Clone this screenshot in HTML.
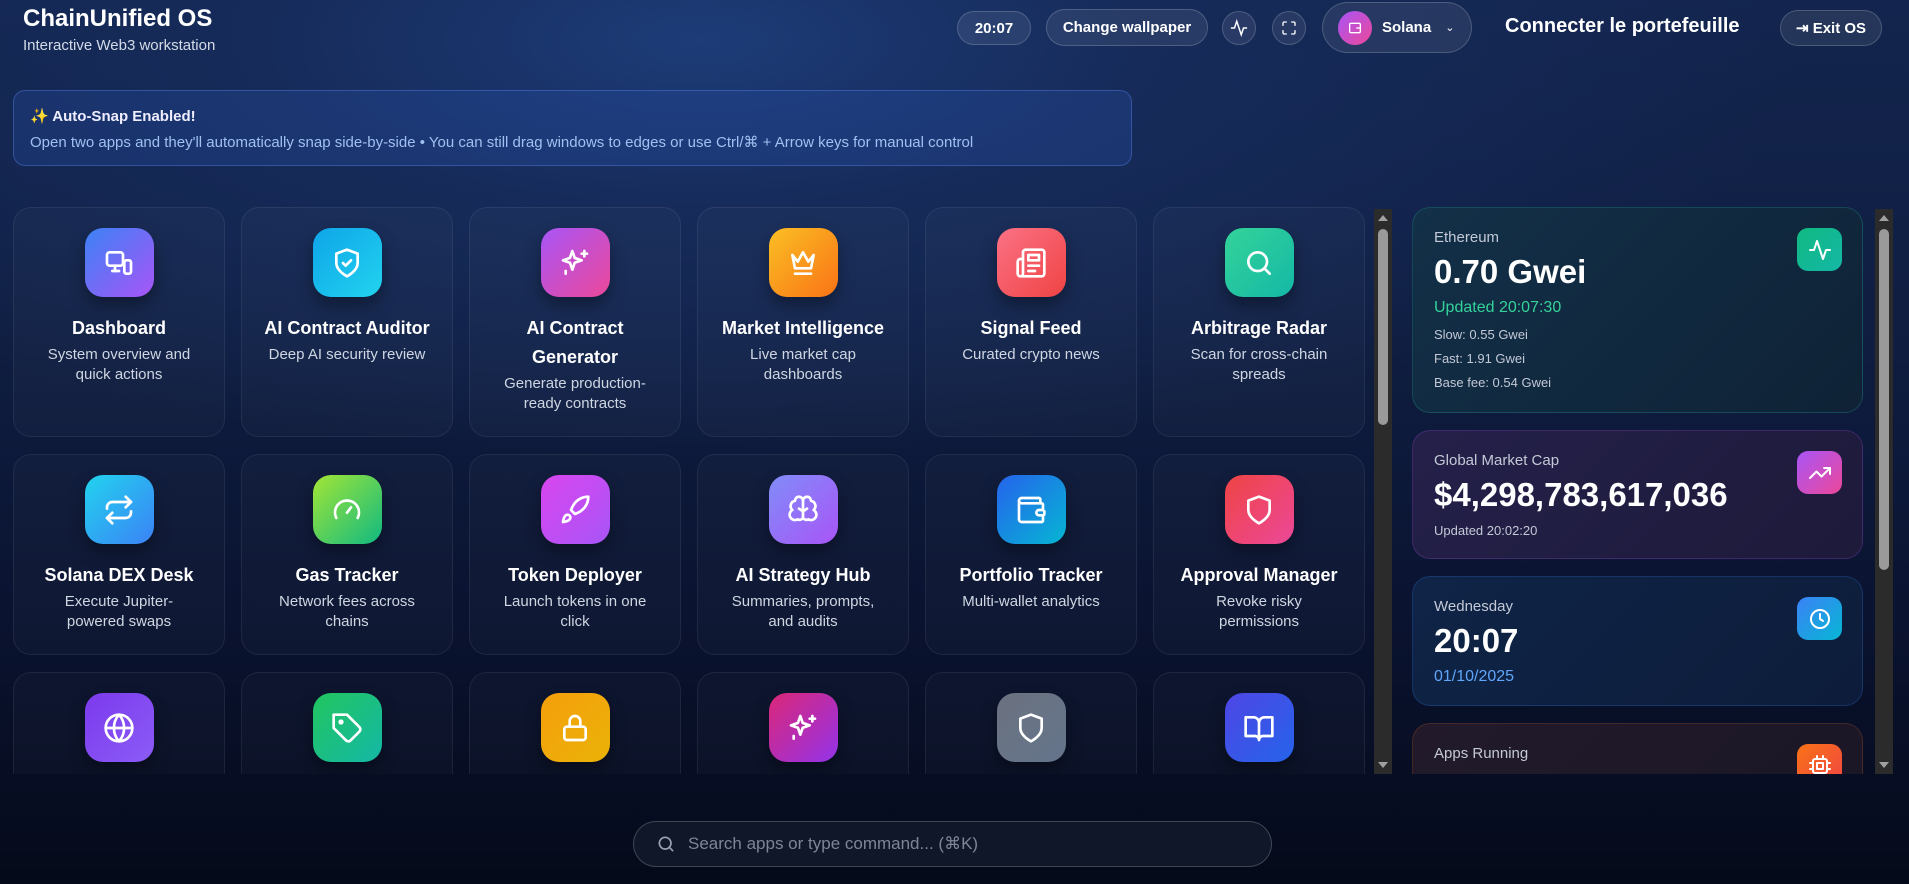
<!DOCTYPE html>
<html><head><meta charset="utf-8"><style>
*{box-sizing:border-box;margin:0;padding:0}
body{width:1909px;height:884px;overflow:hidden;font-family:"Liberation Sans",sans-serif;color:#fff;
background:radial-gradient(ellipse 1100px 420px at 700px 40px,#1d3c78 0%,#162b5a 40%,rgba(14,26,56,0) 100%),linear-gradient(180deg,#13254e 0%,#0f1d40 40%,#0a1330 70%,#050a1a 100%);position:relative}
.abs{position:absolute}
.title{left:23px;top:5px;font-size:24px;font-weight:bold}
.sub{left:23px;top:37px;font-size:15px;color:#d4dbe8}
.pill{position:absolute;border:1px solid rgba(255,255,255,.18);background:rgba(255,255,255,.08);border-radius:999px;display:flex;align-items:center;justify-content:center;font-size:15px;font-weight:bold;color:#fff}
.banner{left:13px;top:90px;width:1119px;height:76px;border:1px solid rgba(90,130,230,.4);background:rgba(40,80,170,.3);border-radius:12px;padding:16px 16px}
.banner b{font-size:15px;display:block;margin-bottom:8px;color:#eef}
.banner span{font-size:15px;color:#9fc0f0}
.grid{left:13px;top:207px;width:1352px;height:567px;overflow:hidden;display:grid;grid-template-columns:repeat(6,212px);column-gap:16px;row-gap:17px;align-content:start}
.card{border:1px solid rgba(255,255,255,.07);background:rgba(255,255,255,.025);border-radius:18px;padding:20px 8px 22px;text-align:center}
.ic{width:69px;height:69px;border-radius:18px;margin:0 auto;display:flex;align-items:center;justify-content:center;box-shadow:0 8px 16px rgba(0,0,0,.35)}
.ic svg{width:32px;height:32px;fill:none;stroke:#fff;stroke-width:2;stroke-linecap:round;stroke-linejoin:round}
.card h3{font-size:18px;font-weight:bold;line-height:29px;margin-top:17px}
.card p{font-size:15px;line-height:20px;color:#cfd6e2;margin-top:2px}
.sb{position:absolute;width:18px;background:#2b2b2b}
.sb .th{position:absolute;left:4px;width:10px;background:#9a9a9a;border-radius:5px}
.sb .up,.sb .dn{position:absolute;left:4px;width:0;height:0;border-left:5px solid transparent;border-right:5px solid transparent}
.sb .up{top:6px;border-bottom:6px solid #a0a0a0}
.sb .dn{bottom:6px;border-top:6px solid #a0a0a0}
.rp{left:1412px;top:207px;width:451px;height:567px;overflow:hidden}
.w{position:absolute;left:0;width:451px;border-radius:18px;border:1px solid rgba(255,255,255,.1);padding:21px 21px}
.w .l{font-size:15px;color:#c3c9d6}
.w .v{font-size:33px;font-weight:bold;margin-top:7px}
.w .wi{position:absolute;right:20px;top:20px;width:45px;height:43px;border-radius:11px;display:flex;align-items:center;justify-content:center}
.w .wi svg{width:24px;height:24px;fill:none;stroke:#fff;stroke-width:2;stroke-linecap:round;stroke-linejoin:round}
.search{left:633px;top:821px;width:639px;height:46px;border-radius:999px;border:1px solid rgba(255,255,255,.2);background:#0f1729;display:flex;align-items:center;padding-left:22px;font-size:17px;color:#7d8596}
</style></head><body>
<div class="abs title">ChainUnified OS</div>
<div class="abs sub">Interactive Web3 workstation</div>
<div class="pill" style="left:957px;top:11px;width:74px;height:34px">20:07</div>
<div class="pill" style="left:1046px;top:9px;width:162px;height:37px">Change wallpaper</div>
<div class="pill" style="left:1222px;top:11px;width:34px;height:34px"><svg width="18" height="18" viewBox="0 0 24 24" fill="none" stroke="#fff" stroke-width="2" stroke-linecap="round"><path d="M22 12h-4l-3 9L9 3l-3 9H2"/></svg></div>
<div class="pill" style="left:1272px;top:11px;width:34px;height:34px"><svg width="16" height="16" viewBox="0 0 24 24" fill="none" stroke="#fff" stroke-width="2" stroke-linecap="round"><path d="M8 3H5a2 2 0 0 0-2 2v3M21 8V5a2 2 0 0 0-2-2h-3M3 16v3a2 2 0 0 0 2 2h3M16 21h3a2 2 0 0 0 2-2v-3"/></svg></div>
<div class="pill" style="left:1322px;top:2px;width:150px;height:51px;justify-content:flex-start;padding-left:15px"><span style="width:34px;height:34px;border-radius:50%;background:linear-gradient(135deg,#a855f7,#ec4899);display:inline-flex;align-items:center;justify-content:center;margin-right:10px"><svg width="16" height="16" viewBox="0 0 24 24" fill="none" stroke="#fff" stroke-width="2"><rect x="4" y="5" width="16" height="14" rx="2"/><path d="M14 12h6"/></svg></span>Solana<span style="margin-left:14px;font-size:11px;font-weight:normal">⌄</span></div>
<div class="abs" style="left:1505px;top:15px;font-size:20px;font-weight:bold">Connecter le portefeuille</div>
<div class="pill" style="left:1780px;top:10px;width:102px;height:36px">⇥&nbsp;Exit OS</div>

<div class="abs banner"><b>✨ Auto-Snap Enabled!</b><span>Open two apps and they'll automatically snap side-by-side • You can still drag windows to edges or use Ctrl/⌘ + Arrow keys for manual control</span></div>

<div class="abs grid">
<div class="card"><div class="ic" style="background:linear-gradient(135deg,#3b82f6,#a855f7)"><svg viewBox="0 0 24 24"><rect x="3" y="4" width="12" height="10" rx="2"/><path d="M7 18h5M9 14v4"/><rect x="16" y="10" width="5" height="10" rx="1.5"/></svg></div><h3>Dashboard</h3><p>System overview and<br>quick actions</p></div>
<div class="card"><div class="ic" style="background:linear-gradient(135deg,#0ea5e9,#22d3ee)"><svg viewBox="0 0 24 24"><path d="M12 22s8-4 8-10V5l-8-3-8 3v7c0 6 8 10 8 10z"/><path d="m9 12 2 2 4-4"/></svg></div><h3>AI Contract Auditor</h3><p>Deep AI security review</p></div>
<div class="card"><div class="ic" style="background:linear-gradient(135deg,#a855f7,#ec4899)"><svg viewBox="0 0 24 24"><path d="M10 3l1.8 5.2L17 10l-5.2 1.8L10 17l-1.8-5.2L3 10l5.2-1.8z"/><path d="M19 3v4M17 5h4M5 18v2"/></svg></div><h3>AI Contract<br>Generator</h3><p>Generate production-<br>ready contracts</p></div>
<div class="card"><div class="ic" style="background:linear-gradient(135deg,#fbbf24,#f97316)"><svg viewBox="0 0 24 24"><path d="M4 6l4 5 4-7 4 7 4-5-2 10H6z"/><path d="M6 20h12"/></svg></div><h3>Market Intelligence</h3><p>Live market cap<br>dashboards</p></div>
<div class="card"><div class="ic" style="background:linear-gradient(135deg,#fb7185,#ef4444)"><svg viewBox="0 0 24 24"><path d="M4 22h16a2 2 0 0 0 2-2V4a2 2 0 0 0-2-2H8a2 2 0 0 0-2 2v16a2 2 0 0 1-4 0v-9c0-1 1-2 2-2h2"/><path d="M18 14h-8M15 18h-5M10 6h8v4h-8z"/></svg></div><h3>Signal Feed</h3><p>Curated crypto news</p></div>
<div class="card"><div class="ic" style="background:linear-gradient(135deg,#34d399,#14b8a6)"><svg viewBox="0 0 24 24"><circle cx="11" cy="11" r="7"/><path d="m20 20-4-4"/></svg></div><h3>Arbitrage Radar</h3><p>Scan for cross-chain<br>spreads</p></div>

<div class="card"><div class="ic" style="background:linear-gradient(135deg,#22d3ee,#3b82f6)"><svg viewBox="0 0 24 24"><path d="m17 2 4 4-4 4"/><path d="M3 11V10a4 4 0 0 1 4-4h14"/><path d="m7 22-4-4 4-4"/><path d="M21 13v1a4 4 0 0 1-4 4H3"/></svg></div><h3>Solana DEX Desk</h3><p>Execute Jupiter-<br>powered swaps</p></div>
<div class="card"><div class="ic" style="background:linear-gradient(135deg,#a3e635,#10b981)"><svg viewBox="0 0 24 24"><path d="m12 14 3-4"/><path d="M4 18a9 9 0 1 1 16 0"/></svg></div><h3>Gas Tracker</h3><p>Network fees across<br>chains</p></div>
<div class="card"><div class="ic" style="background:linear-gradient(135deg,#d946ef,#a855f7)"><svg viewBox="0 0 24 24"><path d="M5 16c-1.5 1.3-2 5-2 5s3.7-.5 5-2c.7-.8.7-2.1-.1-2.9a2.2 2.2 0 0 0-2.9-.1z"/><path d="m12 15-3-3a22 22 0 0 1 2-4A13 13 0 0 1 22 2c0 2.7-.8 7.5-6 11a22 22 0 0 1-4 2z"/></svg></div><h3>Token Deployer</h3><p>Launch tokens in one<br>click</p></div>
<div class="card"><div class="ic" style="background:linear-gradient(135deg,#818cf8,#a855f7)"><svg viewBox="0 0 24 24"><path d="M12 5a3 3 0 1 0-6 .1 4 4 0 0 0-2 6.9 4 4 0 0 0 4 7 3 3 0 0 0 4-1V5z"/><path d="M12 5a3 3 0 1 1 6 .1 4 4 0 0 1 2 6.9 4 4 0 0 1-4 7 3 3 0 0 1-4-1"/><path d="M12 13l-3-2M12 13l3-2"/></svg></div><h3>AI Strategy Hub</h3><p>Summaries, prompts,<br>and audits</p></div>
<div class="card"><div class="ic" style="background:linear-gradient(135deg,#2563eb,#06b6d4)"><svg viewBox="0 0 24 24"><path d="M19 7V4a1 1 0 0 0-1-1H5a2 2 0 0 0 0 4h15a1 1 0 0 1 1 1v4h-3a2 2 0 0 0 0 4h3a1 1 0 0 0 1-1v-2"/><path d="M3 5v14a2 2 0 0 0 2 2h15a1 1 0 0 0 1-1v-4"/></svg></div><h3>Portfolio Tracker</h3><p>Multi-wallet analytics</p></div>
<div class="card"><div class="ic" style="background:linear-gradient(135deg,#ef4444,#ec4899)"><svg viewBox="0 0 24 24"><path d="M12 22s8-4 8-10V5l-8-3-8 3v7c0 6 8 10 8 10z"/></svg></div><h3>Approval Manager</h3><p>Revoke risky<br>permissions</p></div>

<div class="card"><div class="ic" style="background:linear-gradient(135deg,#7c3aed,#8b5cf6)"><svg viewBox="0 0 24 24"><circle cx="12" cy="12" r="10"/><path d="M2 12h20M12 2a15 15 0 0 1 0 20 15 15 0 0 1 0-20"/></svg></div><h3>&nbsp;</h3></div>
<div class="card"><div class="ic" style="background:linear-gradient(135deg,#22c55e,#14b8a6)"><svg viewBox="0 0 24 24"><path d="M12 2H2v10l9.3 9.3a2.4 2.4 0 0 0 3.4 0l6.6-6.6a2.4 2.4 0 0 0 0-3.4z"/><circle cx="7.5" cy="7.5" r="1"/></svg></div><h3>&nbsp;</h3></div>
<div class="card"><div class="ic" style="background:linear-gradient(135deg,#f59e0b,#eab308)"><svg viewBox="0 0 24 24"><rect x="4" y="11" width="16" height="10" rx="2"/><path d="M8 11V7a4 4 0 0 1 8 0v4"/></svg></div><h3>&nbsp;</h3></div>
<div class="card"><div class="ic" style="background:linear-gradient(135deg,#db2777,#9333ea)"><svg viewBox="0 0 24 24"><path d="M10 3l1.8 5.2L17 10l-5.2 1.8L10 17l-1.8-5.2L3 10l5.2-1.8z"/><path d="M19 3v4M17 5h4M5 18v2"/></svg></div><h3>&nbsp;</h3></div>
<div class="card"><div class="ic" style="background:linear-gradient(135deg,#6b7280,#64748b)"><svg viewBox="0 0 24 24"><path d="M12 22s8-4 8-10V5l-8-3-8 3v7c0 6 8 10 8 10z"/></svg></div><h3>&nbsp;</h3></div>
<div class="card"><div class="ic" style="background:linear-gradient(135deg,#4f46e5,#2563eb)"><svg viewBox="0 0 24 24"><path d="M2 4h6a4 4 0 0 1 4 4v13a3 3 0 0 0-3-3H2zM22 4h-6a4 4 0 0 0-4 4v13a3 3 0 0 1 3-3h7z"/></svg></div><h3>&nbsp;</h3></div>
</div>

<div class="sb" style="left:1374px;top:209px;height:565px"><div class="up"></div><div class="th" style="top:20px;height:196px"></div><div class="dn"></div></div>
<div class="sb" style="left:1875px;top:209px;height:565px"><div class="up"></div><div class="th" style="top:20px;height:341px"></div><div class="dn"></div></div>

<div class="abs rp">
<div class="w" style="top:0;height:206px;background:linear-gradient(135deg,#123048,#0f2236);border-color:rgba(45,212,191,.2)"><div class="l">Ethereum</div><div class="v">0.70 Gwei</div><div style="color:#34d399;font-size:16px;margin-top:8px">Updated 20:07:30</div><div style="font-size:13px;color:#c3c9d6;line-height:24px;margin-top:6px">Slow: 0.55 Gwei<br>Fast: 1.91 Gwei<br>Base fee: 0.54 Gwei</div><div class="wi" style="background:linear-gradient(135deg,#10b981,#14b8a6)"><svg viewBox="0 0 24 24"><path d="M22 12h-4l-3 9L9 3l-3 9H2"/></svg></div></div>
<div class="w" style="top:223px;height:129px;background:linear-gradient(135deg,#24204a,#1d1a3a);border-color:rgba(168,85,247,.22)"><div class="l">Global Market Cap</div><div class="v">$4,298,783,617,036</div><div style="font-size:13px;color:#c3c9d6;margin-top:9px">Updated 20:02:20</div><div class="wi" style="background:linear-gradient(135deg,#a855f7,#ec4899)"><svg viewBox="0 0 24 24"><path d="m22 7-8.5 8.5-5-5L2 17"/><path d="M16 7h6v6"/></svg></div></div>
<div class="w" style="top:369px;height:130px;background:linear-gradient(135deg,#0f2447,#0d1c3a);border-color:rgba(59,130,246,.22)"><div class="l">Wednesday</div><div class="v">20:07</div><div style="color:#60a5fa;font-size:16px;margin-top:8px">01/10/2025</div><div class="wi" style="background:linear-gradient(135deg,#3b82f6,#06b6d4)"><svg viewBox="0 0 24 24"><circle cx="12" cy="12" r="9"/><path d="M12 7v5l3 2"/></svg></div></div>
<div class="w" style="top:516px;height:130px;background:linear-gradient(135deg,#221a2a,#1a1626);border-color:rgba(249,115,22,.18)"><div class="l">Apps Running</div><div class="wi" style="background:linear-gradient(135deg,#f97316,#ef4444)"><svg viewBox="0 0 24 24"><rect x="5" y="5" width="14" height="14" rx="2"/><rect x="9" y="9" width="6" height="6"/><path d="M9 2v3M15 2v3M9 19v3M15 19v3M2 9h3M2 15h3M19 9h3M19 15h3"/></svg></div></div>
</div>

<div class="abs search"><svg width="20" height="20" viewBox="0 0 24 24" fill="none" stroke="#9aa2b1" stroke-width="2" stroke-linecap="round" style="margin-right:12px"><circle cx="11" cy="11" r="7"/><path d="m20 20-4-4"/></svg>Search apps or type command... (⌘K)</div>
</body></html>
